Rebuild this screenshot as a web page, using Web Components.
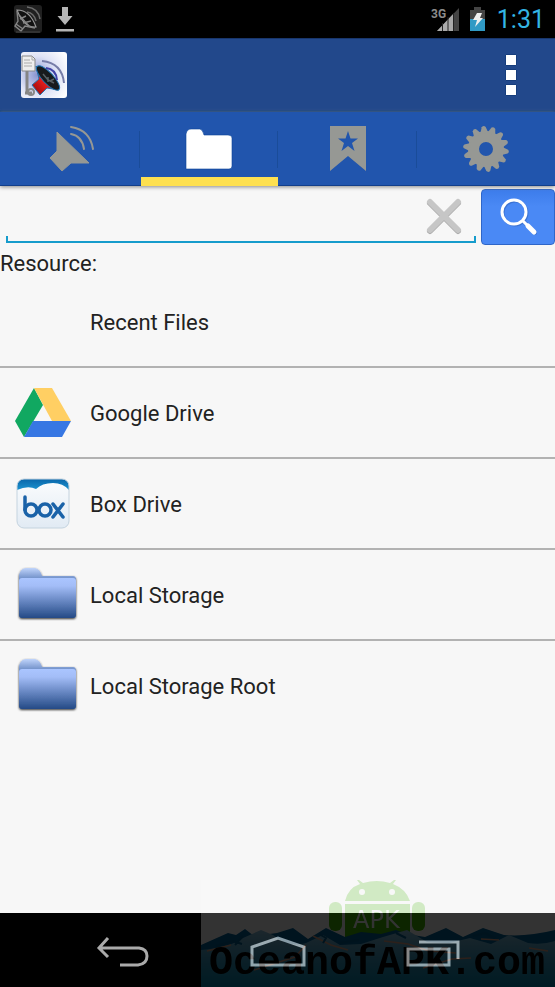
<!DOCTYPE html>
<html lang="en">
<head>
<meta charset="utf-8">
<meta name="viewport" content="width=device-width, initial-scale=1">
<title>Resources</title>
<style>
html, body { margin: 0; height: 100%; }
body { background: #f7f7f7; color: #222; font: 22px/28px Roboto, "Liberation Sans", sans-serif; }
</style>
</head>
<body>
<file-app></file-app>
<script>
const define = (name, html) => {
  const template = document.createElement('template');
  template.innerHTML = '<style>*{box-sizing:border-box}svg{display:block}button{font:inherit;color:inherit;border:0;margin:0;padding:0;background:none;cursor:pointer}</style>' + html;
  customElements.define(name, class extends HTMLElement {
    constructor() {
      super();
      this.attachShadow({ mode: 'open' }).append(template.content.cloneNode(true));
    }
  });
};

define('status-bar', `
<style>
:host { display: flex; align-items: center; justify-content: space-between; height: 38px; padding: 0 10px 0 14px; background: #000; color: #33b5e5; }
div { display: flex; align-items: center; }
.left { gap: 12px; }
.right { gap: 8px; }
time { font-size: 25px; line-height: 36px; padding: 2px 0 0 2px; }
text { font: bold 12px Roboto, sans-serif; fill: #8c8c8c; }
</style>
<div class="left">
  <svg width="28" height="30" viewBox="0 0 28 30" fill="none" aria-hidden="true">
    <rect y="1" width="28" height="28" rx="3" fill="#202020"/>
    <path d="M3 6 Q16 6 22 23 Q10 24 3 6Z" fill="#111" stroke="#999" stroke-width="1.2"/>
    <path d="M3 7 L4 17 L1 22 L7 27 L11 22 L21 24 M5 11 L15 22 M6 15 L12 12 M9 19 L17 17 M2 20 L9 25" stroke="#858585" stroke-width="1.4"/>
    <path d="M13 3 Q24 4 26 15 M13 8 Q20 9 22 17" stroke="#6c6c6c" stroke-width="1.5"/>
    <path d="M2 28H26" stroke="#444"/>
  </svg>
  <svg width="22" height="28" viewBox="0 0 22 28" aria-hidden="true"><path d="M8 2h6v9h4.500L11 20 3.500 11H8z M2 24h18v2.500H2z" fill="#b5b5b5"/></svg>
</div>
<div class="right">
  <svg width="30" height="28" viewBox="0 0 30 28" role="img" aria-label="3G signal">
    <path d="M6 26 28 3V26Z" fill="#444"/><path d="M6 26 23 8V26Z" fill="#aaa"/>
    <path d="M11.500 18V26M17 12V26M22.500 8V26" stroke="#222" stroke-width="1"/>
    <text x="0" y="13">3G</text>
  </svg>
  <svg width="18" height="28" viewBox="0 0 18 28" role="img" aria-label="Battery charging">
    <path d="M1 5h4V2h7v3h4v21H1z" fill="#444"/><path d="M1 14h15v12H1z" fill="#309ac5"/>
    <path d="M8 8h5l-2 5h3L6 22l2-7H4z" fill="#eee"/>
  </svg>
  <time>1:31</time>
</div>`);

define('app-bar', `
<style>
:host { display: flex; align-items: center; justify-content: space-between; height: 74px; padding: 0 28px 0 20px; background: #22488b; border-top: 1px solid #18366d; border-bottom: 2px solid #1a4581; box-sizing: border-box; }
button { width: 32px; height: 48px; display: grid; place-items: center; }
</style>
<svg width="48" height="48" viewBox="0 0 48 48" role="img" aria-label="App logo">
  <defs>
    <radialGradient id="g" cx=".35" cy=".5" r=".75"><stop stop-color="#8894cf"/><stop offset=".55" stop-color="#dfe3f6"/><stop offset="1" stop-color="#fff"/></radialGradient>
    <linearGradient id="r" x1="0" y1="1" x2="1" y2="0"><stop stop-color="#8c0505"/><stop offset=".5" stop-color="#ee2222"/><stop offset="1" stop-color="#a30808"/></linearGradient>
  </defs>
  <rect x="1" y="1" width="46" height="46" rx="3" fill="url(#g)"/>
  <path d="M7 18V42H12M5 42H9" fill="none" stroke="#858585" stroke-width="3"/>
  <circle cx="11" cy="41" r="3" fill="none" stroke="#888" stroke-width="2"/>
  <path d="M2 5H12L15 8V20H2Z" fill="#eee" stroke="#888"/><path d="M12 5V9H15M4 9H10M4 12H12M4 15H12" fill="none" stroke="#aaa"/>
  <path d="M16 15 19 28 12 34 20 44 27 37 39 39Z" fill="url(#r)" stroke="#2473ac" stroke-linejoin="round"/>
  <ellipse cx="28" cy="27" rx="16" ry="5.500" transform="rotate(47 28 27)" fill="#171b1d" stroke="#2077b5"/>
  <path d="M23 23 28 29 34 32M28 26V31M30 30 34 28" stroke="#586165" stroke-width="1.5" fill="none"/>
  <path d="M26 17Q36 18 37 29" fill="none" stroke="#4142a8" stroke-width="2"/><path d="M22 10Q42 12 44 32" fill="none" stroke="#777da8" stroke-width="2"/>
</svg>
<button aria-label="More options"><svg width="12" height="42" viewBox="0 0 12 42" fill="#fff" stroke="#163d7c"><path d="M.5.5h11v11H.5zM.5 15.500h11v11H.5zM.5 30.500h11v11H.5z"/></svg></button>`);

define('nav-tab', `
<style>
:host { display: block; color: #969894; }
:host(:not(:last-child)) { background: linear-gradient(#1a4c99, #1a4c99) right center / 1px 37px no-repeat; }
button { display: grid; place-items: center; width: 100%; height: 100%; padding-top: 9px; border-bottom: 9px solid transparent; }
:host([selected]) { color: #fff; }
:host([selected]) button { border-color: #fee050; }
</style>
<button role="tab"><slot></slot></button>`);

define('tab-strip', `
<style>
:host { display: grid; grid-template-columns: repeat(4, 1fr); gap: 1px; height: 74px; padding-left: 2px; box-sizing: border-box; background: #2155ad; box-shadow: inset 0 -1px #123f8b, 0 1px 4px #888; position: relative; }
</style>
<nav-tab aria-label="Speech"><svg width="48" height="48" viewBox="0 0 48 48"><path d="M10 7 42 38 24 38 15 46 3 33 10 26Z" fill="currentColor" stroke="currentColor" stroke-linejoin="round"/><path d="M24 9Q35 11 37 24M24 2Q43 5 46 24" fill="none" stroke="currentColor" stroke-width="2" stroke-linecap="round"/></svg></nav-tab>
<nav-tab selected aria-label="Files"><svg width="48" height="48" viewBox="0 0 48 48"><path d="M1 44V9Q2 4 6 4H15Q18 5 19 10H43Q47 10 47 13V41Q47 44 44 44H4Q1 44 1 44Z" fill="currentColor" stroke="#0c4598" stroke-width=".6"/></svg></nav-tab>
<nav-tab aria-label="Bookmarks"><svg width="48" height="48" viewBox="0 0 48 48"><path fill-rule="evenodd" d="M6 1H42V46L24 31 6 46ZM24 6l-2.500 7.500H14l6 4.500-2.500 8 6.500-5 6.500 5-2.500-8 6-4.500h-7.500z" fill="currentColor"/></svg></nav-tab>
<nav-tab aria-label="Settings"><svg width="48" height="48" viewBox="0 0 48 48"><g id="gear" fill="currentColor"><path fill-rule="evenodd" d="M24 6a18 18 0 1 0 0 36 18 18 0 0 0 0-36ZM24 17a7 7 0 1 1 0 14 7 7 0 0 1 0-14Z"/></g></svg></nav-tab>`);

define('search-row', `
<style>
:host { display: flex; align-items: flex-start; gap: 5px; padding: 3px 0 0 6px; }
.field { flex: 1; min-width: 0; height: 54px; display: flex; align-items: center; padding: 0 10px 0 8px; background: linear-gradient(#169ccc,#169ccc) left bottom/2px 7px no-repeat, linear-gradient(#169ccc,#169ccc) right bottom/2px 7px no-repeat, linear-gradient(#169ccc,#169ccc) bottom/100% 2px no-repeat; }
input { flex: 1; min-width: 0; height: 42px; border: 0; background: none; outline: 0; font: inherit; color: inherit; }
.clear { padding: 2px; }
.go { width: 74px; height: 56px; border: 1px solid #2f66c8; border-radius: 4px; background: linear-gradient(#3c7ceb, #4a89f5 30%); display: grid; place-items: center; }
</style>
<div class="field"><input type="text" aria-label="Search"><button class="clear" aria-label="Clear"><svg width="40" height="40" viewBox="0 0 40 40" fill="none" stroke-width="6" stroke-linecap="round"><path d="M6 7 34 35M34 7 6 35" stroke="#aaa"/><path d="M6 6 34 34M34 6 6 34" stroke="#c6c6c6"/></svg></button></div>
<button class="go" aria-label="Search"><svg width="42" height="42" viewBox="0 0 42 42" fill="none" stroke-linecap="round"><g stroke="#2e5eb3" opacity=".5"><circle cx="18" cy="17" r="12" stroke-width="3"/><path d="m27 26 11 11" stroke-width="4"/></g><g stroke="#fff"><circle cx="17" cy="16" r="12" stroke-width="3"/><path d="m26 25 5 5" stroke-width="3"/><path d="m31 30 6 6" stroke-width="5"/></g></svg></button>`);

define('resource-row', `
<style>
:host { display: block; border-bottom: 2px solid #b2b2b2; }
:host(:last-of-type) { border-bottom-color: transparent; }
a { display: grid; grid-template-columns: 64px 1fr; column-gap: 12px; align-items: center; height: 89px; padding: 0 14px; color: inherit; text-decoration: none; }
.icon { height: 64px; }
.label { padding-top: 2px; }
</style>
<a href="#"><span class="icon"><slot name="icon"></slot></span><span class="label"><slot></slot></span></a>`);

define('folder-icon', `
<style>:host { display: block; }</style>
<svg width="64" height="64" viewBox="0 0 64 64" aria-hidden="true">
  <defs><linearGradient id="f" x2="0" y2="1"><stop stop-color="#aac5ff"/><stop offset=".2" stop-color="#a3bdf7"/><stop offset="1" stop-color="#244a86"/></linearGradient><linearGradient id="t" x2="0" y2="1"><stop stop-color="#c0d4fb"/><stop offset=".6" stop-color="#6687c2"/></linearGradient>
  <filter id="s" x="-20%" y="-20%" width="140%" height="140%"><feDropShadow dx="0" dy="1" stdDeviation="1" flood-color="#000" flood-opacity=".8"/></filter></defs>
  <g filter="url(#s)"><path d="M5 25V12Q7 5 12 5H21Q26 6 28 13H59Q62 13 62 17V25Z" fill="url(#t)"/><rect x="5" y="15" width="57" height="40" rx="3" fill="url(#f)"/></g>
</svg>`);

define('resource-list', `
<style>
:host { display: block; }
h2 { margin: 0; padding: 5px 0 0; font: inherit; line-height: 27px; }
svg { overflow: visible; }
</style>
<h2>Resource:</h2>
<resource-row>Recent Files</resource-row>
<resource-row>Google Drive
  <svg slot="icon" width="64" height="64" viewBox="0 0 64 64" aria-hidden="true"><path d="M20 7 29 24 10 56 1 40Z" fill="#11a861"/><path d="M20 7H38L57 40H38Z" fill="#ffcf63"/><path d="M19 40H57L48 56H10Z" fill="#3777e3"/></svg>
</resource-row>
<resource-row>Box Drive
  <svg slot="icon" width="64" height="64" viewBox="0 0 64 64" aria-hidden="true">
    <defs><linearGradient id="b" x2="0" y2="1"><stop stop-color="#fff"/><stop offset="1" stop-color="#dfe9f3"/></linearGradient><linearGradient id="w" x2="0" y2="1"><stop stop-color="#0a66aa"/><stop offset="1" stop-color="#1c93cf"/></linearGradient><clipPath id="c"><rect x="3" y="7" width="52" height="49" rx="7"/></clipPath></defs>
    <g clip-path="url(#c)"><path d="M0 0H60V60H0Z" fill="url(#b)"/><path d="M3 7H55V18Q49 11 39 11 28 11 22 17 14 13 3 18Z" fill="url(#w)"/></g>
    <rect x="3" y="7" width="52" height="49" rx="7" fill="none" stroke="#c4d3df"/>
    <g fill="none" stroke="#1a62a8" stroke-width="3.500" stroke-linecap="round"><path d="M11 25V38"/><circle cx="17" cy="38" r="6"/><circle cx="31" cy="38" r="6"/><path d="M39 32 49 45M49 32 39 45"/></g>
  </svg>
</resource-row>
<resource-row>Local Storage<folder-icon slot="icon"></folder-icon></resource-row>
<resource-row>Local Storage Root<folder-icon slot="icon"></folder-icon></resource-row>`);

define('system-nav', `
<style>
:host { display: flex; justify-content: center; gap: 92px; height: 74px; background: #000; color: #aaa; }
button { width: 64px; display: grid; place-items: center; padding-top: 4px; }
</style>
<button aria-label="Back"><svg width="56" height="36" viewBox="0 0 56 36" fill="none" stroke="currentColor" stroke-width="3"><path d="M14 4 5 14 14 23M5 14H45Q53 15 53 22 53 30 44 31H26"/></svg></button>
<button aria-label="Home"><svg width="56" height="36" viewBox="0 0 56 36" fill="none" stroke="currentColor" stroke-width="3"><path d="M2 31V13L28 4 54 13V31Z"/></svg></button>
<button aria-label="Recent apps"><svg width="56" height="36" viewBox="0 0 56 36" fill="none" stroke="currentColor" stroke-width="3"><path d="M2 15H43V31H2ZM13 8H52V25"/></svg></button>`);

define('site-watermark', `
<style>
:host { display: block; position: absolute; right: 0; bottom: 0; opacity: .2; pointer-events: none; }
.name { font: bold 40px "Liberation Mono", monospace; fill: #000; }
.apk { font: 24px "DejaVu Sans", sans-serif; fill: #fff; }
</style>
<svg width="354" height="107" viewBox="0 0 354 107">
  <defs><linearGradient id="sea" x2="0" y2="1"><stop stop-color="#8ac0dc"/><stop offset=".5" stop-color="#3c9cc2"/><stop offset="1" stop-color="#0086b0"/></linearGradient></defs>
  <path fill="#fff" d="M0 0H354V107H0Z"/>
  <g fill="#40b900"><path d="M144 21Q147 8 159 4L156 0H158L162 3Q176-1 189 3L193 0H195L192 4Q205 9 209 21ZM144 24H209V58H144Z"/><rect x="128" y="22" width="13" height="29" rx="6"/><rect x="211" y="22" width="13" height="29" rx="6"/></g>
  <g fill="#fff"><circle cx="161" cy="12" r="3"/><circle cx="191" cy="12" r="3"/></g>
  <text class="apk" x="152" y="48">APK</text>
  <path fill="#00639b" d="M0 65 27 53 35 55 44 49 53 56 76 53 92 48 107 59 125 48 144 57 160 52 180 54 195 50 206 54 224 57 245 48 262 57 282 48 303 55Q326 57 354 50V107H0Z"/>
  <path fill="url(#sea)" d="M0 70Q30 67 42 58L60 50 72 55Q88 68 105 63L122 55 139 65 160 64 182 57 206 50 226 62 248 63 269 58 290 64 308 55 327 63Q342 65 354 61V107H0Z"/>
  <g fill="none" stroke="#dc9e82" stroke-width="1.500"><path d="M6 71 30 65M53 90 75 83 94 77 105 65M112 56 130 65 147 70M183 61 207 64 228 71 255 73M222 88 251 79 270 78M280 59 298 60M328 68 347 71"/></g>
  <g fill="none" stroke="#005e90" stroke-width="2"><path d="M42 56 34 65M118 54 125 58 122 63M195 53 205 58M272 56 284 53 294 58M15 66 32 61 41 64M139 63 158 60"/></g>
  <text class="name" x="8" y="94">OceanofAPK.com</text>
</svg>`);

define('file-app', `
<style>
:host { display: flex; flex-direction: column; min-height: 100vh; position: relative; overflow: hidden; }
main { flex: 1; }
</style>
<status-bar></status-bar>
<app-bar></app-bar>
<tab-strip role="tablist"></tab-strip>
<main><search-row></search-row><resource-list></resource-list></main>
<system-nav></system-nav>
<site-watermark></site-watermark>`);

/* Fourteen evenly spaced teeth around the settings wheel. */
const gear = document.querySelector('file-app').shadowRoot.querySelector('tab-strip').shadowRoot.getElementById('gear');
for (let i = 0; i < 14; i++) {
  const tooth = document.createElementNS('http://www.w3.org/2000/svg', 'path');
  tooth.setAttribute('d', 'M20 8 22 2Q24 0 26 2L28 8Z');
  tooth.setAttribute('transform', `rotate(${i * 360 / 14 - 6} 24 24)`);
  gear.append(tooth);
}
</script>
</body>
</html>
